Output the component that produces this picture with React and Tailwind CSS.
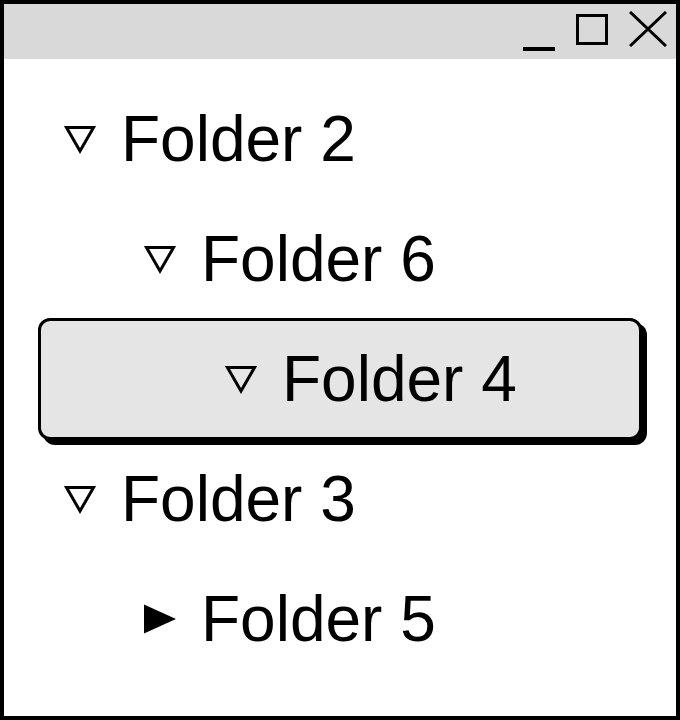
import React from "react"

const rows = [
    { label: "Folder 2", level: 0, open: true },
    { label: "Folder 6", level: 1, open: true },
    { label: "Folder 4", level: 2, open: true, selected: true },
    { label: "Folder 3", level: 0, open: true },
    { label: "Folder 5", level: 1, open: false },
]

const indent = ["pl-[60px]", "pl-[140px]", "pl-[220px]"]

function OpenArrow() {
    return (
        <svg width="32" height="30" viewBox="0 0 32 30" className="shrink-0">
            <polygon points="2.5,3.5 29.5,3.5 16,27" fill="none" stroke="black" strokeWidth="3" strokeLinejoin="miter" />
        </svg>
    )
}

function ClosedArrow() {
    return (
        <svg width="32" height="30" viewBox="0 0 32 30" className="shrink-0">
            <polygon points="0,0.5 32,15 0,29.5" fill="black" />
        </svg>
    )
}

export default function App() {
    return (
        <div className="w-[680px] h-[720px] border-4 border-black bg-white flex flex-col font-['Liberation_Sans',Arial,sans-serif] text-black">
            {/* Title bar */}
            <div className="h-[55px] bg-[#d9d9d9] flex items-center justify-end pr-[9px] gap-[21px] shrink-0">
                <svg width="32" height="40" viewBox="0 0 32 40" className="-ml-[2px]">
                    <rect x="0" y="35" width="32" height="4" fill="black" />
                </svg>
                <svg width="32" height="32" viewBox="0 0 32 32" className="mt-[-3px]">
                    <rect x="1.5" y="1.5" width="29" height="28" fill="none" stroke="black" strokeWidth="3" />
                </svg>
                <svg width="38" height="36" viewBox="0 0 38 36" className="mt-[-6px]">
                    <path d="M1 1 L37 35 M37 1 L1 35" stroke="black" strokeWidth="3" />
                </svg>
            </div>

            {/* Tree */}
            <div className="flex flex-col pt-[20px]">
                {rows.map((row) =>
                    row.selected ? (
                        <div key={row.label} className="h-[122px] -my-px mx-[34px] rounded-[12px] border-[3px] border-black bg-[#e5e5e5] shadow-[5px_5px_0_0_#000] flex items-center pl-[184px] gap-[25px]">
                            <OpenArrow />
                            <span className="text-[64px] leading-none">{row.label}</span>
                        </div>
                    ) : (
                        <div key={row.label} className={`h-[120px] flex items-center gap-[25px] ${indent[row.level]}`}>
                            {row.open ? <OpenArrow /> : <ClosedArrow />}
                            <span className="text-[64px] leading-none">{row.label}</span>
                        </div>
                    )
                )}
            </div>
        </div>
    )
}
